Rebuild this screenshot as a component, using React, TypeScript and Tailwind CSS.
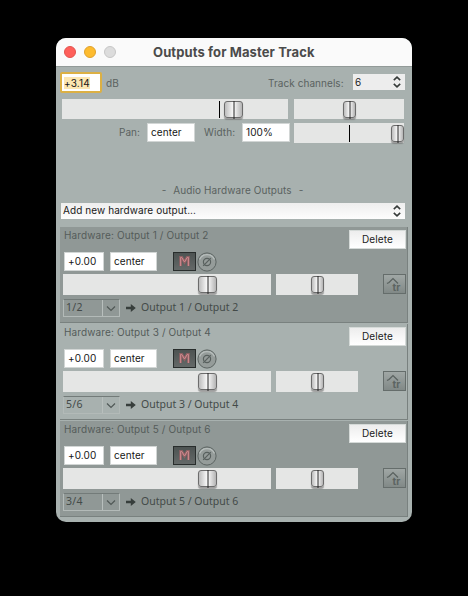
import React from "react";

const UI = "font-['Inter','Liberation_Sans',sans-serif]";

function Thumb({ left, width }: { left: string; width: string }) {
  return (
    <div className={`absolute ${left} ${width} top-[2px] h-[18px]`}>
      <div className="h-[17px] w-full rounded-[3px] border border-[#6c6c6c] bg-linear-to-r from-[#bdbdbd] via-[#fcfcfc] to-[#b4b4b4] shadow-[0_2px_1px_rgba(110,110,110,0.6)]" />
      <div className="absolute top-0 left-1/2 h-[18px] w-px -translate-x-1/2 bg-[#222]" />
    </div>
  );
}

function Slider({
  className,
  thumb,
  thumbWidth,
  tick,
}: {
  className: string;
  thumb: string;
  thumbWidth: string;
  tick?: string;
}) {
  return (
    <div className={`relative shrink-0 bg-[#e5e6e5] ${className}`}>
      {tick && <div className={`absolute top-[2px] h-[17px] w-px bg-black ${tick}`} />}
      <Thumb left={thumb} width={thumbWidth} />
    </div>
  );
}

function Field({ text, className }: { text: string; className: string }) {
  return (
    <div
      className={`flex h-[19px] shrink-0 items-center border border-[#d2d6d5] bg-white pb-[2px] pl-[3px] text-[10px] leading-none tracking-[0.08px] text-[#161616] ${className}`}
    >
      <span>{text}</span>
    </div>
  );
}

function UpDown() {
  return (
    <svg width="8" height="12" viewBox="0 0 8 12" fill="none" stroke="#363b39" strokeWidth="1.6">
      <path d="M0.8 4.2 L4 1.2 L7.2 4.2 M0.8 7.8 L4 10.8 L7.2 7.8" />
    </svg>
  );
}

function Output({
  title,
  pair,
  dest,
  dark,
}: {
  title: string;
  pair: string;
  dest: string;
  dark: boolean;
}) {
  return (
    <section
      className={`flex h-[96px] w-[348px] flex-col border-r border-b border-[#79817f] pl-[3px] ${
        dark ? "bg-[#909896]" : "bg-[#a8b1af]"
      }`}
    >
      <div className="flex h-[25px] justify-between">
        <h2 className="mt-[2px] ml-px text-[10px] leading-[13px] tracking-[0.12px] whitespace-nowrap text-[#555c5a]">
          {title}
        </h2>
        <button className="mt-[3px] mr-px flex h-[19px] w-[57px] items-center justify-center border border-[#d5dad8] bg-linear-to-b from-[#ededed] to-white pb-[2px] text-[10px] leading-none tracking-[0.15px] text-[#202020]">
          Delete
        </button>
      </div>
      <div className="flex h-[22px] pl-px">
        <Field text="+0.00" className="w-[40px]" />
        <Field text="center" className="ml-[6px] w-[47px]" />
        <div className="ml-[16px] flex h-[19px] w-[23px] items-center justify-center border border-[#282d2c] bg-linear-to-b from-[#4d5352] to-[#646968]">
          <svg width="11" height="11" viewBox="0 0 11 11" fill="none">
            <path d="M1.6 10 V1.5 H2.8 L5.5 6 L8.2 1.5 H9.4 V10" stroke="#8f6063" strokeWidth="2.8" />
            <path d="M1.6 10 V1.5 H2.8 L5.5 6 L8.2 1.5 H9.4 V10" stroke="#cf8b90" strokeWidth="1" />
          </svg>
        </div>
        <svg className="ml-px" width="20" height="20" viewBox="0 0 20 20" fill="none">
          <circle cx="10" cy="10" r="9.1" fill="#959c9a" stroke="#5c6462" />
          <path d="M2.6 7.5 A8 8 0 0 1 17.4 7.5" stroke="#b8bfbd" strokeWidth="1.2" />
          <circle cx="10" cy="10" r="3.6" stroke="#58605e" strokeWidth="1.2" />
          <path d="M6.2 13.8 L13.8 6.2" stroke="#58605e" strokeWidth="1.2" />
        </svg>
      </div>
      <div className="flex h-[25px]">
        <Slider className="h-[21px] w-[208px]" thumb="left-[135px]" thumbWidth="w-[19px]" />
        <Slider className="ml-[5px] h-[21px] w-[82px]" thumb="left-[35px]" thumbWidth="w-[13px]" />
        <div className="ml-[25px] h-[20px] w-[23px] border border-[#656d6b] bg-linear-to-b from-[#a0a7a5] to-[#818987]">
          <svg width="21" height="18" viewBox="0 0 21 18" fill="none">
            <path d="M3 8.5 L5 7.5 L9 3.5 L14 8.5" stroke="#59615f" strokeWidth="1.2" />
            <text x="8.5" y="15.5" fontSize="10" fontWeight="700" fill="#5c6462" fontFamily="Inter, sans-serif">
              tr
            </text>
          </svg>
        </div>
      </div>
      <div className="flex h-[18px] items-center font-['Noto_Sans','Open_Sans',sans-serif] text-[10.5px] leading-none text-[#434a48]">
        <div className="flex h-[18px] w-[57px] border border-t-[#737b79] border-r-[#b3bab8] border-b-[#b3bab8] border-l-[#b3bab8]">
          <div className="flex w-[39px] items-center border-r border-[#b8bfbd] pb-px pl-[2px] tracking-[0.3px]">{pair}</div>
          <div className="flex flex-1 items-center justify-center">
            <svg width="10" height="7" viewBox="0 0 10 7" fill="none" stroke="#505856" strokeWidth="1.2">
              <path d="M1 1.5 L5 5.5 L9 1.5" />
            </svg>
          </div>
        </div>
        <svg className="ml-[6px]" width="10" height="8" viewBox="0 0 10 8" fill="#373e3c">
          <path d="M0 2.7 H4.8 V0 L9.8 4 L4.8 8 V5.3 H0 Z" />
        </svg>
        <span className="ml-[5px] pb-px whitespace-nowrap">{dest}</span>
      </div>
    </section>
  );
}

export default function App() {
  return (
    <main className={`h-[596px] w-[468px] overflow-hidden bg-black pt-[38px] pl-[56px] ${UI}`}>
      <div className="h-[484px] w-[356px] overflow-hidden rounded-[10px] bg-[#a8b1af]">
        <header className="flex h-[29px] items-center border-b border-[#929a98] bg-[#fafafa] pl-[8px]">
          <div className="flex gap-[8px]">
            <span className="h-[12px] w-[12px] rounded-full border border-[#e2534e] bg-[#fe5f5a]" />
            <span className="h-[12px] w-[12px] rounded-full border border-[#dfa12c] bg-[#fdbb2e]" />
            <span className="h-[12px] w-[12px] rounded-full border border-[#c6c6c6] bg-[#dcdcdc]" />
          </div>
          <h1 className="ml-[37px] text-[13px] leading-none font-bold tracking-[0.11px] whitespace-nowrap text-[#4b4b4b]">
            Outputs for Master Track
          </h1>
        </header>
        <div className="flex h-[32px] pt-[5px] pl-[4px] text-[10px] leading-none text-[#5a6260]">
          <div className="flex h-[21px] w-[42px] items-center rounded-[2px] border-2 border-[#dcb044] bg-white pl-[2px] text-[#171717]">
            <span className="bg-[#fce6b1] py-px tracking-[0.2px]">+3.14</span>
          </div>
          <span className="mt-[6px] ml-[4px] w-[162px] tracking-[0.1px]">dB</span>
          <span className="mt-[6px] w-[85px] tracking-[0.06px] whitespace-nowrap">Track channels:</span>
          <div className="mt-[2px] flex h-[16px] w-[52px] items-center justify-between bg-[#ededed] pr-[4px] pl-[2px] text-[#222]">
            <span>6</span>
            <UpDown />
          </div>
        </div>
        <div className="flex h-[24px] pl-[6px]">
          <Slider className="h-[20px] w-[226px]" thumb="left-[162px]" thumbWidth="w-[19px]" tick="left-[157px]" />
          <Slider className="ml-[6px] h-[20px] w-[110px]" thumb="left-[49px]" thumbWidth="w-[13px]" />
        </div>
        <div className="flex h-[60px] pl-[63px] text-[10px] leading-none text-[#5a6260]">
          <span className="mt-[4px] w-[28px]">Pan:</span>
          <Field text="center" className="w-[48px]" />
          <span className="mt-[4px] ml-[9px] w-[38px] tracking-[0.1px]">Width:</span>
          <Field text="100%" className="w-[48px]" />
          <Slider className="ml-[4px] h-[20px] w-[110px]" thumb="left-[97px]" thumbWidth="w-[13px]" tick="left-[55px]" />
        </div>
        <div className="flex h-[20px] justify-center gap-[7px] pr-[3px] text-[10px] leading-[15px] text-[#5a6260]">
          <span>-</span>
          <span className="tracking-[0.1px]">Audio Hardware Outputs</span>
          <span>-</span>
        </div>
        <div className="ml-[5px] flex h-[16px] w-[344px] items-center justify-between bg-linear-to-b from-[#eeeeee] to-[#fdfdfd] pr-[4px] pl-[2px] text-[10px] leading-none text-[#202020]">
          <span className="pb-[2px] tracking-[0.08px]">Add new hardware output...</span>
          <UpDown />
        </div>
        <div className="mt-[8px] ml-[4px] flex flex-col gap-px">
          <Output title="Hardware: Output 1 / Output 2" pair="1/2" dest="Output 1 / Output 2" dark />
          <Output title="Hardware: Output 3 / Output 4" pair="5/6" dest="Output 3 / Output 4" dark={false} />
          <Output title="Hardware: Output 5 / Output 6" pair="3/4" dest="Output 5 / Output 6" dark />
        </div>
      </div>
    </main>
  );
}
